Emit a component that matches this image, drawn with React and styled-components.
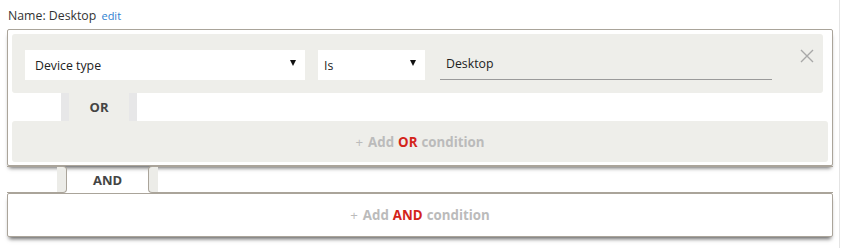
import React from 'react';
import styled, { createGlobalStyle } from 'styled-components';

const GlobalStyle = createGlobalStyle`
  body {
    margin: 0;
    background: #fff;
    font-family: "Open Sans", "Liberation Sans", sans-serif;
    color: #333;
  }
`

const Page = styled.div`
  box-sizing: border-box;
  width: 840px;
  height: 248px;
  padding: 8px 6px 0 7px;
  border-right: 1px solid #e4e4e4;
`

const NameRow = styled.div`
  font-size: 12.3px;
  line-height: 16px;
  padding-left: 1px;
  margin-bottom: 5px;
`

const EditLink = styled.a`
  font-size: 11px;
  color: #2f7fd0;
  cursor: pointer;
  margin-left: 2px;
`

const Group = styled.div`
  border: 1px solid #aaa49a;
  border-radius: 2px;
  padding: 4px 4px 3px 4px;
  box-shadow: 0 4px 4px -2px rgba(0, 0, 0, 0.6);
  background: #fff;
`

const ConditionPanel = styled.div`
  display: flex;
  align-items: flex-start;
  height: 59px;
  box-sizing: border-box;
  padding: 16px 9px 0 13px;
  margin-right: 5px;
  background: #eeeeea;
  border-radius: 3px;
`

const Select = styled.div`
  display: flex;
  align-items: center;
  justify-content: space-between;
  box-sizing: border-box;
  width: ${p => p.$width}px;
  height: 30px;
  margin-right: ${p => p.$gap}px;
  padding: 1px 9px 0 ${p => p.$pad}px;
  background: #fff;
  font-size: 12.3px;
  color: #222;
`

const Arrow = styled.span`
  width: 0;
  height: 0;
  border-left: 3px solid transparent;
  border-right: 3px solid transparent;
  border-top: 6px solid #111;
  margin-top: -5px;
`

const ValueInput = styled.div`
  display: flex;
  align-items: center;
  box-sizing: border-box;
  width: 332px;
  height: 30px;
  padding-left: 6px;
  padding-bottom: 2px;
  border-bottom: 1px solid #9a9a9a;
  font-size: 12.3px;
  color: #222;
`

const Close = styled.svg`
  margin-left: auto;
  margin-top: -1px;
  flex-shrink: 0;
`

const OrRow = styled.div`
  height: 28px;
  display: flex;
`

const OrTab = styled.div`
  width: 76px;
  margin-left: 49px;
  display: flex;
  align-items: center;
  justify-content: center;
  font-size: 13px;
  font-weight: 700;
  color: #444;
  background: linear-gradient(to right, #e7e7e8 0 8px, #eeeeea 8px calc(100% - 8px), #e7e7e8 calc(100% - 8px));
`

const AddBar = styled.div`
  display: flex;
  align-items: center;
  justify-content: center;
  height: ${p => p.$height}px;
  font-size: 13.3px;
  font-weight: 700;
  color: #bbbbbb;
  background: ${p => (p.$filled ? '#eeeeea' : 'transparent')};
  border-radius: 3px;
`

const Plus = styled.span`
  font-weight: 400;
  margin-right: 5px;
`

const Red = styled.span`
  color: #d3241b;
  margin: 0 4px;
`

const Connector = styled.div`
  display: flex;
  height: 27px;
`

const LeftStub = styled.div`
  box-sizing: border-box;
  width: 60px;
  border: 1px solid #aaa49a;
  border-left: none;
  border-radius: 0 4px 4px 0;
  background: linear-gradient(to right, transparent calc(100% - 9px), #ecece8 calc(100% - 9px));
`

const AndLabel = styled.div`
  width: 81px;
  display: flex;
  align-items: center;
  justify-content: center;
  font-size: 13px;
  font-weight: 700;
  color: #444;
`

const RightStub = styled.div`
  flex: 1;
  box-sizing: border-box;
  border: 1px solid #aaa49a;
  border-right: none;
  border-radius: 4px 0 0 4px;
  background: linear-gradient(to right, #ecece8 9px, transparent 9px);
`

const AndBox = styled.div`
  border: 1px solid #aaa49a;
  border-radius: 2px;
  box-shadow: 0 4px 4px -2px rgba(0, 0, 0, 0.6);
  background: #fff;
`

const App = () => {
  return (
    <>
      <GlobalStyle />
      <Page>
        <NameRow>
          Name: Desktop <EditLink>edit</EditLink>
        </NameRow>
        <Group>
          <ConditionPanel>
            <Select $width={280} $gap={13} $pad={10}>
              Device type <Arrow />
            </Select>
            <Select $width={107} $gap={15} $pad={6}>
              Is <Arrow />
            </Select>
            <ValueInput>Desktop</ValueInput>
            <Close width="14" height="14" viewBox="0 0 14 14">
              <path d="M1 1 L13 13 M13 1 L1 13" stroke="#a8a8a8" strokeWidth="1.4" fill="none" />
            </Close>
          </ConditionPanel>
          <OrRow>
            <OrTab>OR</OrTab>
          </OrRow>
          <AddBar $height={41} $filled>
            <Plus>+</Plus> Add <Red>OR</Red> condition
          </AddBar>
        </Group>
        <Connector>
          <LeftStub />
          <AndLabel>AND</AndLabel>
          <RightStub />
        </Connector>
        <AndBox>
          <AddBar $height={42}>
            <Plus>+</Plus> Add <Red>AND</Red> condition
          </AddBar>
        </AndBox>
      </Page>
    </>
  );
}

export default App;
